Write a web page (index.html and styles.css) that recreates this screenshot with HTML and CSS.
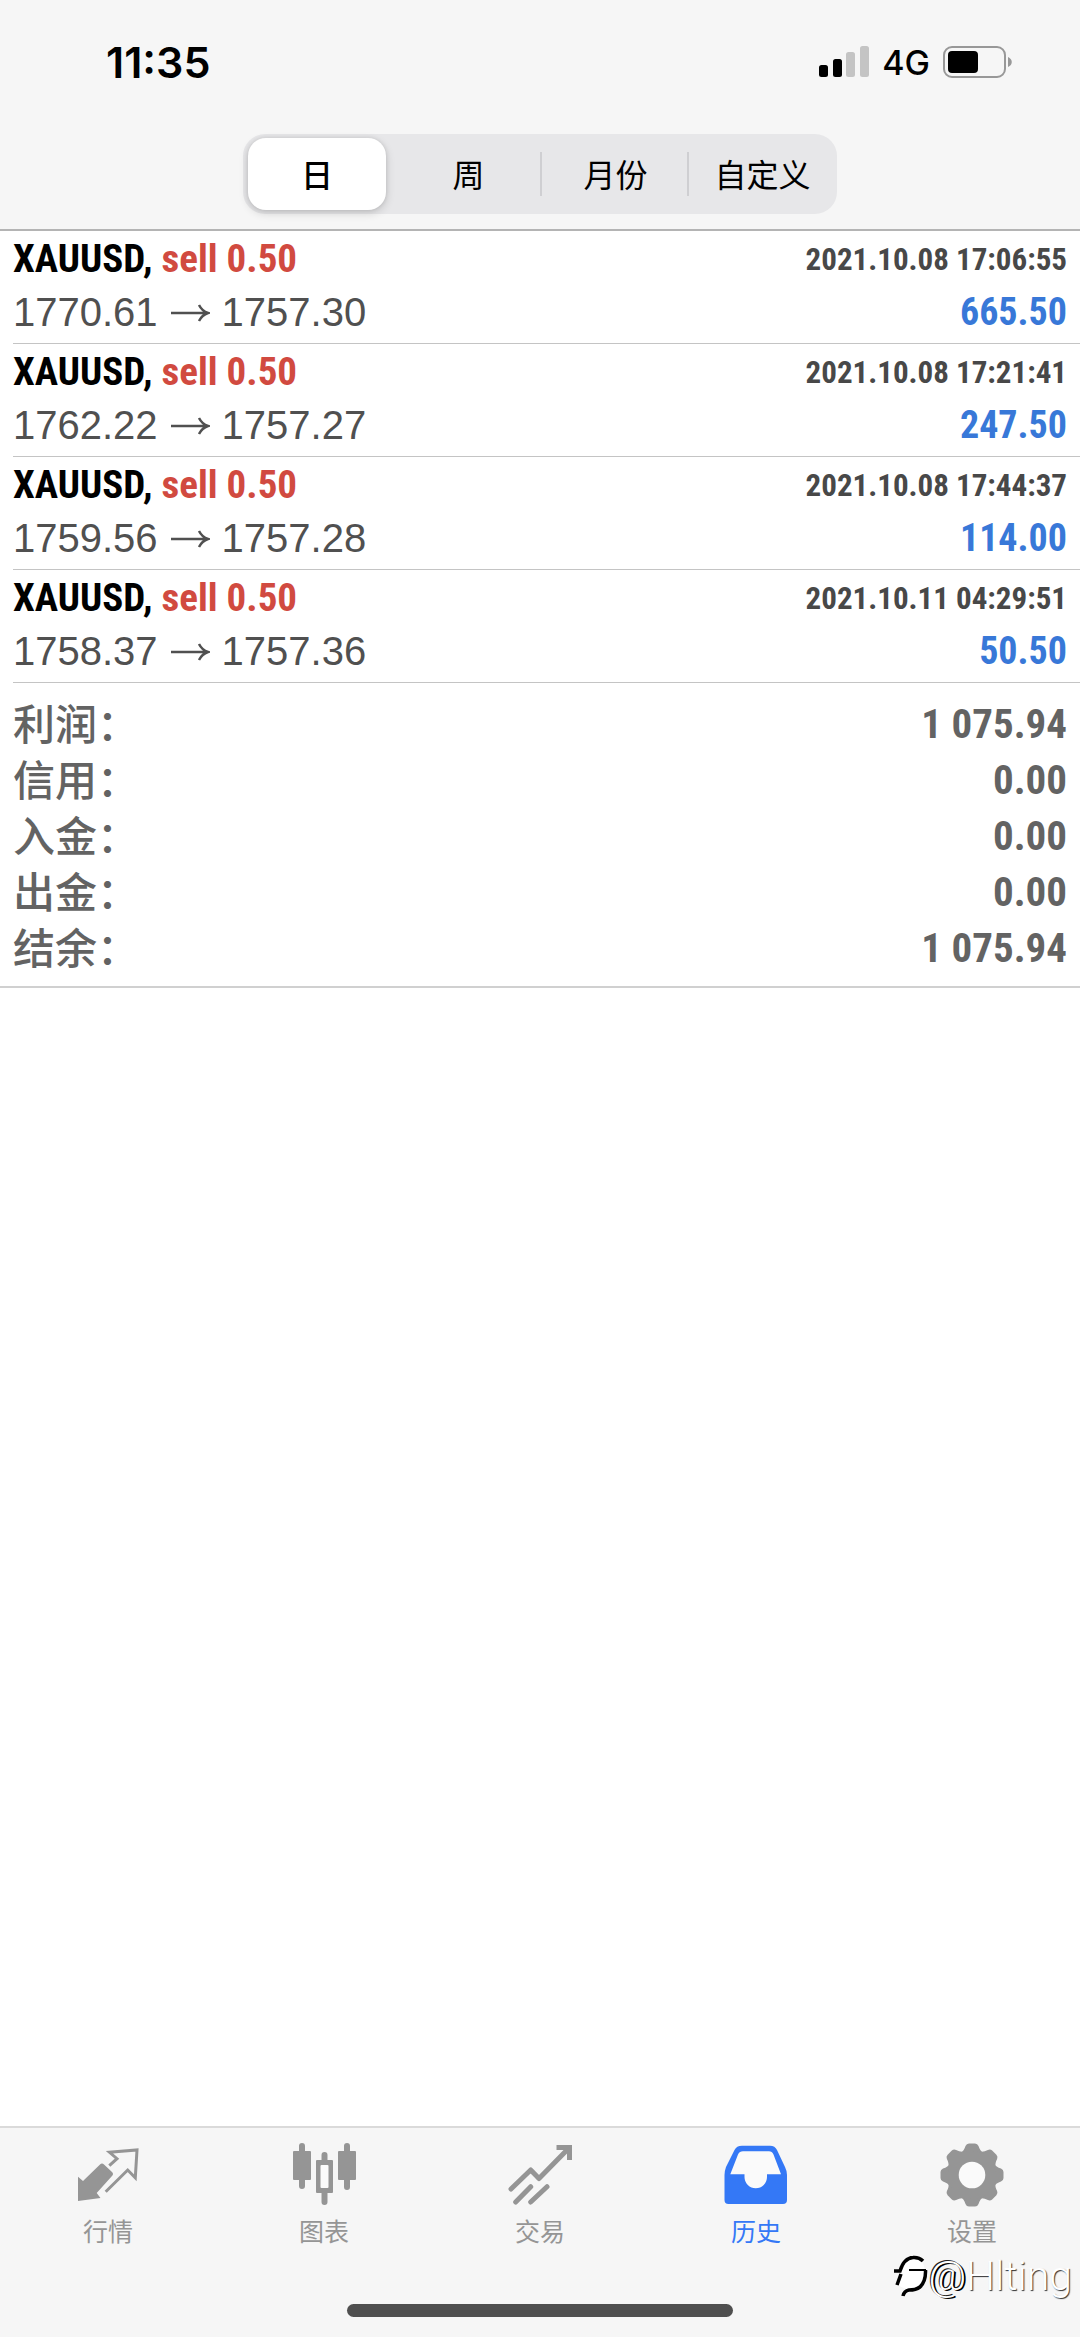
FILE: index.html
```
<!DOCTYPE html>
<html lang="zh-CN">
<head>
<meta charset="utf-8">
<meta name="viewport" content="width=device-width, initial-scale=1">
<title>历史</title>
<link rel="stylesheet" href="styles.css">
</head>
<body>
<header class="top">
  <div class="status">
    <time class="clock">11:35</time>
    <div class="status-right">
      <svg class="signal" width="50" height="32" viewBox="0 0 50 32" aria-hidden="true">
        <rect x="0" y="19" width="9" height="12" rx="2.5"/>
        <rect x="14" y="13" width="9" height="18" rx="2.5"/>
        <rect class="dim" x="27" y="6" width="9" height="25" rx="2.5"/>
        <rect class="dim" x="41" y="0" width="9" height="31" rx="2.5"/>
      </svg>
      <span class="network">4G</span>
      <svg class="battery" width="70" height="32" viewBox="0 0 70 32" aria-hidden="true">
        <rect class="shell" x="1" y="1" width="61" height="30" rx="8"/>
        <rect x="5" y="5" width="30" height="22" rx="4"/>
        <path class="nub" d="M65 11c5 2 5 8 0 10z"/>
      </svg>
    </div>
  </div>
  <div class="segments">
    <button class="segment selected" type="button">日</button>
    <button class="segment" type="button">周</button>
    <button class="segment" type="button">月份</button>
    <button class="segment" type="button">自定义</button>
  </div>
</header>

<main class="content">
  <ul class="trades">
    <li class="trade">
      <div class="line"><span class="deal">XAUUSD, <span class="side">sell 0.50</span></span><time class="date">2021.10.08 17:06:55</time></div>
      <div class="line"><span class="prices">1770.61<svg class="arrow" width="40" height="20" viewBox="0 0 40 20" role="img" aria-label="至"><path d="M1 10H38M29 2q3 6 9 8q-6 2-9 8"/></svg>1757.30</span><span class="profit">665.50</span></div>
    </li>
    <li class="trade">
      <div class="line"><span class="deal">XAUUSD, <span class="side">sell 0.50</span></span><time class="date">2021.10.08 17:21:41</time></div>
      <div class="line"><span class="prices">1762.22<svg class="arrow" width="40" height="20" viewBox="0 0 40 20" role="img" aria-label="至"><path d="M1 10H38M29 2q3 6 9 8q-6 2-9 8"/></svg>1757.27</span><span class="profit">247.50</span></div>
    </li>
    <li class="trade">
      <div class="line"><span class="deal">XAUUSD, <span class="side">sell 0.50</span></span><time class="date">2021.10.08 17:44:37</time></div>
      <div class="line"><span class="prices">1759.56<svg class="arrow" width="40" height="20" viewBox="0 0 40 20" role="img" aria-label="至"><path d="M1 10H38M29 2q3 6 9 8q-6 2-9 8"/></svg>1757.28</span><span class="profit">114.00</span></div>
    </li>
    <li class="trade">
      <div class="line"><span class="deal">XAUUSD, <span class="side">sell 0.50</span></span><time class="date">2021.10.11 04:29:51</time></div>
      <div class="line"><span class="prices">1758.37<svg class="arrow" width="40" height="20" viewBox="0 0 40 20" role="img" aria-label="至"><path d="M1 10H38M29 2q3 6 9 8q-6 2-9 8"/></svg>1757.36</span><span class="profit">50.50</span></div>
    </li>
  </ul>
  <dl class="summary">
    <div class="total"><dt>利润：</dt><dd>1 075.94</dd></div>
    <div class="total"><dt>信用：</dt><dd>0.00</dd></div>
    <div class="total"><dt>入金：</dt><dd>0.00</dd></div>
    <div class="total"><dt>出金：</dt><dd>0.00</dd></div>
    <div class="total"><dt>结余：</dt><dd>1 075.94</dd></div>
  </dl>
</main>

<footer class="bottom">
  <nav class="tabs">
    <a class="tab" href="#quotes">
      <svg class="icon" viewBox="0 0 64 64" aria-hidden="true">
        <path class="fill" d="M2 33.700L7 38L24 21.500Q26 19.500 28 21.500L36 29Q38 31 36 33L20.700 50L24.500 55L2 58Z"/>
        <path class="stroke" stroke-width="3" d="M33.300 22.700L41 15.700L33.500 9.300L61 7L59.300 34.700L51.700 27L29.700 48.700"/>
      </svg>
      <span>行情</span>
    </a>
    <a class="tab" href="#charts">
      <svg class="icon" viewBox="0 0 64 64" aria-hidden="true">
        <path class="stroke" stroke-width="6" stroke-linecap="round" d="M10 3V43M55 3V44M32.500 12V18M32.500 49V59"/>
        <rect class="fill" x="1" y="8" width="18" height="29" rx="1"/>
        <rect class="fill" x="46" y="8" width="18" height="29" rx="1"/>
        <rect class="fill" x="24" y="17" width="17" height="33" rx="1"/>
        <rect class="hole" x="28.500" y="22" width="8" height="23" rx="1"/>
      </svg>
      <span>图表</span>
    </a>
    <a class="tab" href="#trade">
      <svg class="icon" viewBox="0 0 64 64" aria-hidden="true">
        <path class="stroke" stroke-width="5" stroke-linecap="round" stroke-linejoin="round" d="M3 46L22.700 27L31 35.500L59 7M22.700 43.700L7.700 59M39 43.700L22.700 59"/>
        <path class="stroke" stroke-width="5" d="M48.500 4.500H61.500V17"/>
      </svg>
      <span>交易</span>
    </a>
    <a class="tab current" href="#history" aria-current="page">
      <svg class="icon" viewBox="0 0 64 64" aria-hidden="true">
        <path class="fill" d="M18 2.700H46Q51 2.700 53 7L61 24Q63 28 63 32V57Q63 61 59 61H4.500Q.500 61 .500 57V32Q.500 28 2 24L10.500 7Q12.500 2.700 18 2.700Z"/>
        <path class="hole" d="M19 8.300H45Q48 8.300 49.500 11.500L57 31.300H43V34A11.200 11.200 0 0 1 20.500 34V31.300H6.300L14 11.500Q15.500 8.300 19 8.300Z"/>
      </svg>
      <span>历史</span>
    </a>
    <a class="tab" href="#settings">
      <svg class="icon" viewBox="0 0 64 64" aria-hidden="true">
        <defs><path id="tooth" d="M20.500 10Q24 8 25.500 3Q26.500 .500 29 .500H35Q37.500 .500 38.500 3Q40 8 43.500 10L40 16H24Z"/></defs>
        <g class="fill">
          <use href="#tooth"/>
          <use href="#tooth" transform="rotate(45 32 32)"/>
          <use href="#tooth" transform="rotate(90 32 32)"/>
          <use href="#tooth" transform="rotate(135 32 32)"/>
          <use href="#tooth" transform="rotate(180 32 32)"/>
          <use href="#tooth" transform="rotate(225 32 32)"/>
          <use href="#tooth" transform="rotate(270 32 32)"/>
          <use href="#tooth" transform="rotate(315 32 32)"/>
          <circle cx="32" cy="32" r="24"/>
        </g>
        <circle class="hole" cx="32" cy="32" r="13.300"/>
      </svg>
      <span>设置</span>
    </a>
  </nav>
  <div class="home-bar"></div>
  <div class="watermark">
    <svg width="36" height="44" viewBox="0 0 36 44" aria-hidden="true">
      <path class="mark-body" d="M8 16Q12 4 22 4Q30 5 32 16Q32 32 22 35Q12 36 5 31Z"/>
      <path class="mark" d="M1 17H7Q11 4 20 3.500Q26 3 30 7M8 20L4 31M32.500 16Q33 27 27 33Q23 36 16 36Q11 37 10 42"/>
      <path class="mark thin" d="M16 16H33"/>
    </svg>
    <span class="handle"><span class="at">@</span>Hlting</span>
  </div>
</footer>
</body>
</html>
```
FILE: styles.css
```
* {
  box-sizing: border-box;
}

body {
  display: flex;
  flex-direction: column;
  min-height: 100vh;
  margin: 0;
  background: #fff;
  color: #000;
  font-family: "Liberation Sans", "Noto Sans CJK SC", sans-serif;
}

.top {
  display: flex;
  flex-direction: column;
  padding-bottom: 15px;
  border-bottom: 2px solid #b4b4b4;
  background: #f6f6f6;
}

/* Status bar */
.status {
  display: flex;
  align-items: center;
  justify-content: space-between;
  height: 124px;
  padding: 0 67px 0 106px;
  font-family: Inter, sans-serif;
}

.clock {
  font-size: 43px;
  font-weight: 600;
}

.status-right {
  display: flex;
  align-items: center;
  gap: 13px;
}

.network {
  font-size: 34px;
  font-weight: 500;
}

.dim {
  fill: #c4c4c4;
}

.shell {
  fill: none;
  stroke: #989898;
  stroke-width: 2;
}

.nub {
  fill: #989898;
}

/* Period switch */
.segments {
  display: grid;
  grid-template-columns: repeat(4, 1fr);
  width: 55%;
  height: 80px;
  margin: 10px auto 0;
  padding: 4px 1px 4px 5px;
  border-radius: 22px;
  background: #e7e7e9;
}

.segment {
  padding: 0 0 2px;
  border: 0;
  background: linear-gradient(#cfcfd2, #cfcfd2) right center / 2px 44px no-repeat;
  color: #000;
  font: 32px/48px "Noto Sans CJK SC", sans-serif;
}

.segment:last-child {
  background: none;
}

.segment.selected {
  margin-right: 9px;
  border-radius: 18px;
  background: #fff;
  box-shadow: 0 3px 10px rgba(0, 0, 0, .16), 0 0 4px rgba(0, 0, 0, .1);
  font-weight: 500;
}

/* Deals */
.content {
  flex: 1;
}

.trades {
  margin: 0;
  padding: 0 0 0 13px;
  list-style: none;
}

.trade {
  padding: 2px 13px 4px 0;
  border-bottom: 1px solid #c4c4c4;
}

.line {
  display: flex;
  justify-content: space-between;
  height: 53px;
  line-height: 53px;
}

.deal,
.date,
.profit,
.total dd {
  font-family: "Liberation Sans Narrow", "Roboto Condensed", "Liberation Sans", sans-serif;
  font-weight: 700;
}

.deal {
  font-size: 39px;
}

.side {
  color: #d14a40;
}

.date {
  color: #484848;
  font-size: 31px;
}

.prices {
  display: flex;
  align-items: center;
  gap: 12px;
  color: #505050;
  font-size: 40px;
}

.arrow path {
  fill: none;
  stroke: #505050;
  stroke-width: 2.500;
}

.profit {
  color: #3878d8;
  font-size: 38px;
}

/* Totals */
.summary {
  margin: 0;
  padding: 13px 13px 10px;
  border-bottom: 2px solid #d0d0d0;
  color: #636363;
}

.total {
  display: flex;
  justify-content: space-between;
  height: 56px;
  line-height: 56px;
}

.total dt {
  font-family: "Noto Sans CJK SC", sans-serif;
  font-size: 42px;
  font-weight: 500;
  line-height: 52px;
}

.total dd {
  margin: 0;
  font-size: 41px;
}

/* Tab bar */
.bottom {
  position: relative;
  padding-bottom: 20px;
  border-top: 2px solid #dadada;
  background: #f6f6f6;
}

.tabs {
  display: grid;
  grid-template-columns: repeat(5, 1fr);
  height: 176px;
  padding-top: 15px;
}

.tab {
  display: flex;
  flex-direction: column;
  align-items: center;
  gap: 5px;
  color: #959595;
  font-family: "Noto Sans CJK SC", sans-serif;
  font-size: 25px;
  line-height: 36px;
  text-decoration: none;
}

.tab.current {
  color: #3478f6;
}

.icon {
  width: 64px;
  height: 64px;
  overflow: visible;
}

.fill {
  fill: currentColor;
}

.stroke {
  fill: none;
  stroke: currentColor;
}

.hole {
  fill: #fafafa;
}

.home-bar {
  width: 386px;
  height: 13px;
  margin: 0 auto;
  border-radius: 7px;
  background: #4f4f4f;
}

/* Poster's handle, laid over the tab bar */
.watermark {
  position: absolute;
  right: 8px;
  bottom: 37px;
  display: flex;
  align-items: center;
}

.handle {
  color: #fff;
  font: 300 41px/48px Roboto, sans-serif;
  text-shadow: 1px 1px 1px #333;
}

.at {
  text-shadow: 2px 1px 0 #000, -1px -1px 0 #222;
}

.mark-body {
  fill: #fff;
}

.mark {
  fill: none;
  stroke: #000;
  stroke-width: 3.500;
}

.mark.thin {
  stroke-width: 2;
}
```
